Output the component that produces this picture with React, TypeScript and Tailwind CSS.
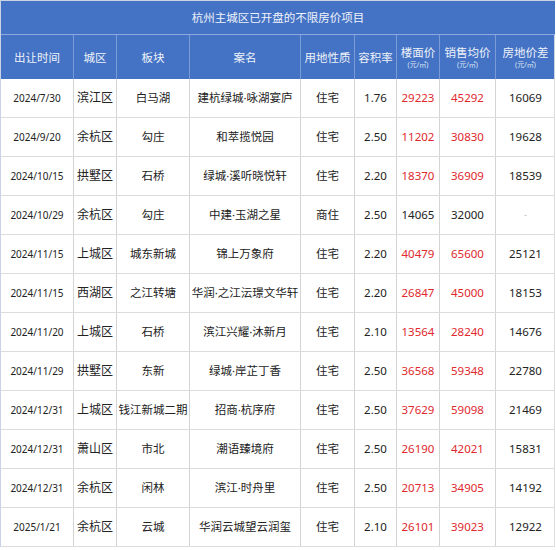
const cols = 'grid-cols-[73px_43px_73px_111px_54px_42px_43px_56px_59px]'

const rows = [
  ['2024/7/30', '滨江区', '白马湖', '建杭绿城·咏湖宴庐', '住宅', '1.76', '29223', '45292', '16069', true],
  ['2024/9/20', '余杭区', '勾庄', '和萃揽悦园', '住宅', '2.50', '11202', '30830', '19628', true],
  ['2024/10/15', '拱墅区', '石桥', '绿城·溪听晓悦轩', '住宅', '2.20', '18370', '36909', '18539', true],
  ['2024/10/29', '余杭区', '勾庄', '中建·玉湖之星', '商住', '2.50', '14065', '32000', '-', false],
  ['2024/11/15', '上城区', '城东新城', '锦上万象府', '住宅', '2.20', '40479', '65600', '25121', true],
  ['2024/11/15', '西湖区', '之江转塘', '华润·之江沄璟文华轩', '住宅', '2.20', '26847', '45000', '18153', true],
  ['2024/11/20', '上城区', '石桥', '滨江兴耀·沐新月', '住宅', '2.10', '13564', '28240', '14676', true],
  ['2024/11/29', '拱墅区', '东新', '绿城·岸芷丁香', '住宅', '2.50', '36568', '59348', '22780', true],
  ['2024/12/31', '上城区', '钱江新城二期', '招商·杭序府', '住宅', '2.50', '37629', '59098', '21469', true],
  ['2024/12/31', '萧山区', '市北', '潮语臻境府', '住宅', '2.50', '26190', '42021', '15831', true],
  ['2024/12/31', '余杭区', '闲林', '滨江·时舟里', '住宅', '2.50', '20713', '34905', '14192', true],
  ['2025/1/21', '余杭区', '云城', '华润云城望云润玺', '住宅', '2.10', '26101', '39023', '12922', true],
] as const

function Head({ label, unit, last }: { label: string; unit?: boolean; last?: boolean }) {
  return (
    <div
      className={`flex flex-col items-center justify-center ${last ? '' : 'border-r border-[#7b9bd6]'}`}
    >
      <span className="text-[11.5px] leading-[15px] text-[#eef2fa]">{label}</span>
      {unit && <span className="text-[7px] leading-[10px] text-[#dfe7f6]">(元/㎡)</span>}
    </div>
  )
}

export default function App() {
  return (
    <div className="w-[556px] h-[550px] bg-white font-['Noto_Sans','Noto_Sans_CJK_SC',sans-serif]">
      <div className="w-[555px] border-l border-t border-[#c9d3e6]">
        <div className="h-[34px] bg-[#4472c4] border-b border-[#8eaadc] flex items-center justify-center text-[11.5px] text-[#eef2fa]">
          杭州主城区已开盘的不限房价项目
        </div>
        <div className={`grid ${cols} h-[44px] bg-[#4472c4] border-r border-[#c9d3e6]`}>
          <Head label="出让时间" />
          <Head label="城区" />
          <Head label="板块" />
          <Head label="案名" />
          <Head label="用地性质" />
          <Head label="容积率" />
          <Head label="楼面价" unit />
          <Head label="销售均价" unit />
          <Head label="房地价差" unit last />
        </div>
        {rows.map((r, i) => (
          <div
            key={i}
            className={`grid ${cols} h-[39px] border-b border-r border-[#dcdcdc] text-[#222] text-[11.5px]`}
          >
            <div className="flex items-center justify-center border-r border-[#d4d4d4] text-[10px]">{r[0]}</div>
            <div className="flex items-center justify-center border-r border-[#d4d4d4] text-[12px]">{r[1]}</div>
            <div className="flex items-center justify-center border-r border-[#d4d4d4] whitespace-nowrap">{r[2]}</div>
            <div className="flex items-center justify-center border-r border-[#d4d4d4] whitespace-nowrap">{r[3]}</div>
            <div className="flex items-center justify-center border-r border-[#d4d4d4]">{r[4]}</div>
            <div className="flex items-center justify-center border-r border-[#d4d4d4]">{r[5]}</div>
            <div className={`flex items-center justify-center border-r border-[#d4d4d4] ${r[9] ? 'text-[#e0282e]' : ''}`}>{r[6]}</div>
            <div className={`flex items-center justify-center border-r border-[#d4d4d4] ${r[9] ? 'text-[#e0282e]' : ''}`}>{r[7]}</div>
            <div className={`flex items-center justify-center ${r[8] === '-' ? 'text-[#bbb] text-[9px]' : ''}`}>{r[8]}</div>
          </div>
        ))}
      </div>
    </div>
  )
}
